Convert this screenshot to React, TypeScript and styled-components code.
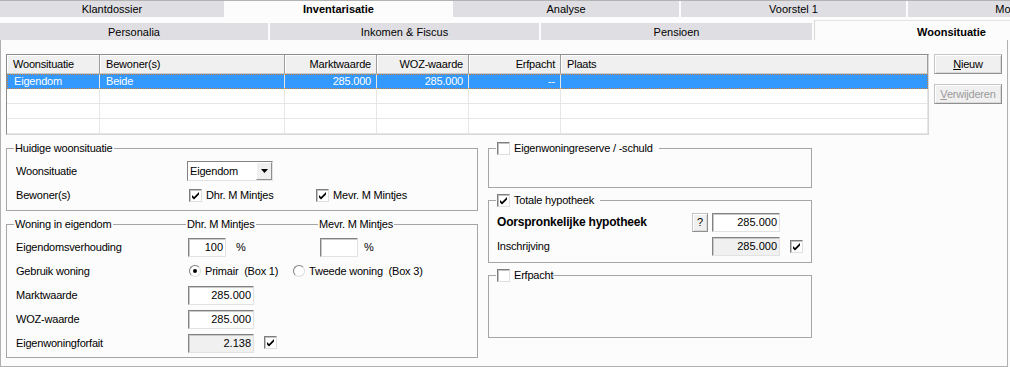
import React from 'react';
import styled, { createGlobalStyle, css } from 'styled-components';

const GlobalStyle = createGlobalStyle`
  html, body { margin: 0; padding: 0; background: #fcfcfc; }
  body {
    font-family: "Liberation Sans", Arial, sans-serif;
    font-size: 11px;
    color: #000;
    overflow: hidden;
  }
  *, *::before, *::after { box-sizing: border-box; }
`;

const Screen = styled.div`
  width: 1010px;
  height: 367px;
  overflow: hidden;
  display: flex;
  flex-direction: column;
  background: #fcfcfc;
`;

/* ---------- tabs ---------- */
const TabRow = styled.div`
  display: flex;
  gap: 2px;
  height: 17px;
  border-top: 1px solid #b3b3b3;
  flex-shrink: 0;
  overflow: hidden;
`;

const TopTab = styled.div<{ $w: number; $active?: boolean }>`
  flex: 0 0 ${p => p.$w}px;
  height: 16px;
  display: flex;
  align-items: center;
  justify-content: center;
  background: ${p => (p.$active ? '#fcfcfc' : '#dfdfe3')};
  font-weight: ${p => (p.$active ? 700 : 400)};
  white-space: nowrap;
  overflow: hidden;
`;

const SubTabRow = styled.div`
  display: flex;
  gap: 2px;
  height: 20px;
  margin-top: 3px;
  align-items: flex-end;
  flex-shrink: 0;
  overflow: hidden;
`;

const SubTab = styled.div<{ $w: number; $active?: boolean }>`
  flex: 0 0 ${p => p.$w}px;
  height: ${p => (p.$active ? 20 : 17)}px;
  display: flex;
  align-items: center;
  justify-content: center;
  white-space: nowrap;
  background: ${p => (p.$active ? '#fcfcfc' : '#dfdfe3')};
  font-weight: ${p => (p.$active ? 700 : 400)};
  ${p =>
    p.$active &&
    css`
      border-left: 1px solid #d6d6d6;
      border-top: 1px solid #e4e4e4;
      padding-top: 2px;
    `}
`;

/* ---------- panel ---------- */
const Panel = styled.div`
  flex: 1;
  width: 1008px;
  border: 1px solid #b0b0b0;
  border-top: none;
  padding: 14px 0 0 5px;
  display: flex;
  flex-direction: column;
`;

const TopSection = styled.div`
  display: flex;
  gap: 5px;
  align-items: flex-start;
`;

const DataGrid = styled.div`
  width: 923px;
  height: 81px;
  display: grid;
  grid-template-columns: 93px 185px 92px 92px 92px 1fr;
  grid-template-rows: 19px repeat(4, 15px);
  border: 1px solid;
  border-color: #8c8c8c #d6d6d6 #d6d6d6 #8c8c8c;
  background: #fff;
  letter-spacing: -0.2px;
`;

const HeadCell = styled.div<{ $right?: boolean }>`
  background: #f0f0f0;
  border-right: 1px solid #9c9c9c;
  border-bottom: 1px solid #c8c8c8;
  box-shadow: inset 1px 1px 0 #fff;
  padding: 0 5px 0 6px;
  line-height: 18px;
  text-align: ${p => (p.$right ? 'right' : 'left')};
  white-space: nowrap;
  overflow: hidden;
`;

const BodyCell = styled.div<{ $right?: boolean; $selected?: boolean; $first?: boolean; $last?: boolean }>`
  border-right: 1px solid #e6e6e6;
  border-bottom: 1px solid #e6e6e6;
  padding: 0 5px 0 6px;
  line-height: 14px;
  text-align: ${p => (p.$right ? 'right' : 'left')};
  white-space: nowrap;
  overflow: hidden;
  ${p =>
    p.$selected &&
    css`
      background: #3399ff;
      color: #fff;
      border-top: 1px dotted #c9803a;
      border-bottom: 1px dotted #c9803a;
      line-height: 13px;
    `}
  ${p => p.$selected && p.$first && css`border-left: 1px dotted #c9803a;`}
  ${p => p.$selected && p.$last && css`border-right: 1px dotted #c9803a;`}
`;

const ButtonCol = styled.div`
  display: flex;
  flex-direction: column;
  gap: 10px;
`;

const PushButton = styled.button<{ $w: number; $h: number; $disabled?: boolean }>`
  width: ${p => p.$w}px;
  height: ${p => p.$h}px;
  padding: 0;
  font-family: "Liberation Sans", Arial, sans-serif;
  font-size: 11px;
  letter-spacing: -0.2px;
  background: #f0f0f0;
  color: ${p => (p.$disabled ? '#9a9a9a' : '#000')};
  border: 1px solid;
  border-color: #c4c4c4 #8f8f8f #8f8f8f #c4c4c4;
  box-shadow: inset 1px 1px 0 #fff, inset -1px -1px 0 #dadada;
  u { text-decoration: underline; }
`;

/* ---------- lower section ---------- */
const Lower = styled.div`
  display: flex;
  gap: 10px;
  margin-top: 7px;
  align-items: flex-start;
`;

const Column = styled.div<{ $w: number; $gap: number }>`
  width: ${p => p.$w}px;
  display: flex;
  flex-direction: column;
  gap: ${p => p.$gap}px;
`;

const Group = styled.fieldset`
  margin: 0;
  padding: 0;
  min-width: 0;
  border: 1px solid #a6a6a6;
`;

const Legend = styled.legend<{ $pr?: number; $full?: boolean }>`
  margin-left: 7px;
  padding: 0 ${p => p.$pr ?? 1}px 0 1px;
  height: 13px;
  line-height: 13px;
  letter-spacing: -0.2px;
  ${p =>
    p.$full &&
    css`
      width: calc(100% - 7px);
      padding: 0;
    `}
`;

const LegendInner = styled.span`
  display: inline-flex;
  align-items: center;
  gap: 4px;
  height: 13px;
  white-space: nowrap;
`;

const LegendGrid = styled.div`
  display: grid;
  grid-template-columns: 172px 132px 1fr;
  height: 13px;
`;

const LegendCell = styled.div`
  display: flex;
  align-items: center;
  white-space: nowrap;
  span { padding: 0 1px; }
`;

const Rule = styled.div`
  flex: 1;
  height: 1px;
  background: #a6a6a6;
`;

const GroupBody = styled.div<{ $pad: string; $h?: number }>`
  padding: ${p => p.$pad};
  display: flex;
  flex-direction: column;
  gap: 4px;
  ${p => p.$h !== undefined && css`height: ${p.$h}px;`}
`;

const FormRow = styled.div<{ $cols: string }>`
  display: grid;
  grid-template-columns: ${p => p.$cols};
  align-items: center;
  height: 20px;
`;

const Label = styled.div<{ $bold?: boolean }>`
  white-space: pre;
  letter-spacing: -0.2px;
  ${p =>
    p.$bold &&
    css`
      font-weight: 700;
      font-size: 12px;
    `}
`;

const Cell = styled.div<{ $span?: boolean; $pl?: number; $end?: boolean }>`
  display: flex;
  align-items: center;
  padding-left: ${p => p.$pl ?? 0}px;
  ${p => p.$span && css`grid-column: 2 / -1;`}
  ${p => p.$end && css`justify-content: flex-end;`}
`;

const Field = styled.div<{ $w: number; $disabled?: boolean }>`
  width: ${p => p.$w}px;
  height: 19px;
  border: 1px solid;
  border-color: #828282 #e2e2e2 #e2e2e2 #828282;
  box-shadow: inset 1px 1px 0 #c9c9c9;
  background: ${p => (p.$disabled ? '#f0f0f0' : '#fff')};
  text-align: right;
  padding-right: 2px;
  line-height: 17px;
`;

const Pct = styled.span<{ $ml: number }>`
  margin-left: ${p => p.$ml}px;
`;

const SelectBox = styled.div`
  width: 86px;
  height: 20px;
  display: flex;
  border: 1px solid;
  border-color: #828282 #e2e2e2 #e2e2e2 #828282;
  background: #fff;
  letter-spacing: -0.2px;
`;

const SelectText = styled.div`
  flex: 1;
  padding-left: 2px;
  line-height: 18px;
`;

const SelectArrow = styled.div`
  width: 16px;
  height: 18px;
  background: #f0f0f0;
  border: 1px solid;
  border-color: #fff #8f8f8f #8f8f8f #fff;
  display: flex;
  align-items: center;
  justify-content: center;
`;

const CheckBox = styled.span`
  display: inline-flex;
  flex: 0 0 13px;
  width: 13px;
  height: 13px;
  background: #fff;
  border: 1px solid;
  border-color: #7e7e7e #dedede #dedede #7e7e7e;
  box-shadow: inset 1px 1px 0 #c2c2c2;
  align-items: center;
  justify-content: center;
`;

const Choices = styled.div`
  display: flex;
  padding-left: 2px;
  align-items: center;
`;

const Choice = styled.div<{ $w?: number }>`
  display: flex;
  align-items: center;
  gap: 4px;
  white-space: pre;
  letter-spacing: -0.2px;
  ${p => p.$w !== undefined && css`width: ${p.$w}px;`}
`;

const RadioDot = styled.span<{ $on?: boolean }>`
  display: inline-flex;
  width: 12px;
  height: 12px;
  border-radius: 50%;
  border: 1px solid;
  border-color: #7e7e7e #dedede #dedede #7e7e7e;
  background: #fff;
  align-items: center;
  justify-content: center;
  &::after {
    content: '';
    width: 4px;
    height: 4px;
    border-radius: 50%;
    background: ${p => (p.$on ? '#000' : 'transparent')};
  }
`;

const Check = ({ checked }: { checked?: boolean }) => (
  <CheckBox>
    {checked && (
      <svg width="11" height="11" viewBox="0 0 11 11">
        <path d="M2 5 L4 7 L9 2 L9 4.5 L4 9.5 L2 7.5 Z" fill="#000" />
      </svg>
    )}
  </CheckBox>
);

const DownArrow = () => (
  <svg width="7" height="4" viewBox="0 0 7 4">
    <polygon points="0,0 7,0 3.5,4" fill="#000" />
  </svg>
);

const headers: { t: string; right?: boolean }[] = [
  { t: 'Woonsituatie' },
  { t: 'Bewoner(s)' },
  { t: 'Marktwaarde', right: true },
  { t: 'WOZ-waarde', right: true },
  { t: 'Erfpacht', right: true },
  { t: 'Plaats' },
];

const selectedRow = ['Eigendom', 'Beide', '285.000', '285.000', '--', ''];

export default function App() {
  return (
    <>
      <GlobalStyle />
      <Screen>
        <TabRow>
          <TopTab $w={224}>Klantdossier</TopTab>
          <TopTab $w={225} $active>Inventarisatie</TopTab>
          <TopTab $w={226}>Analyse</TopTab>
          <TopTab $w={225}>Voorstel 1</TopTab>
          <TopTab $w={226}>Monitoring</TopTab>
        </TabRow>
        <SubTabRow>
          <SubTab $w={268}>Personalia</SubTab>
          <SubTab $w={269}>Inkomen &amp; Fiscus</SubTab>
          <SubTab $w={271}>Pensioen</SubTab>
          <SubTab $w={274} $active>Woonsituatie</SubTab>
        </SubTabRow>

        <Panel>
          <TopSection>
            <DataGrid>
              {headers.map(h => (
                <HeadCell key={h.t} $right={h.right}>{h.t}</HeadCell>
              ))}
              {selectedRow.map((v, i) => (
                <BodyCell
                  key={'s' + i}
                  $selected
                  $first={i === 0}
                  $last={i === selectedRow.length - 1}
                  $right={headers[i].right}
                >
                  {v}
                </BodyCell>
              ))}
              {[0, 1, 2].map(r =>
                headers.map((h, i) => <BodyCell key={`${r}-${i}`} $right={h.right} />)
              )}
            </DataGrid>
            <ButtonCol>
              <PushButton $w={68} $h={20}><u>N</u>ieuw</PushButton>
              <PushButton $w={68} $h={20} $disabled><u>V</u>erwijderen</PushButton>
            </ButtonCol>
          </TopSection>

          <Lower>
            <Column $w={472} $gap={7}>
              <Group>
                <Legend><LegendInner>Huidige woonsituatie</LegendInner></Legend>
                <GroupBody $pad="6px 8px 5px 9px">
                  <FormRow $cols="171px 1fr">
                    <Label>Woonsituatie</Label>
                    <Cell>
                      <SelectBox>
                        <SelectText>Eigendom</SelectText>
                        <SelectArrow><DownArrow /></SelectArrow>
                      </SelectBox>
                    </Cell>
                  </FormRow>
                  <FormRow $cols="171px 1fr">
                    <Label>Bewoner(s)</Label>
                    <Choices>
                      <Choice $w={127}><Check checked />Dhr. M Mintjes</Choice>
                      <Choice><Check checked />Mevr. M Mintjes</Choice>
                    </Choices>
                  </FormRow>
                </GroupBody>
              </Group>

              <Group>
                <Legend $full>
                  <LegendGrid>
                    <LegendCell><span>Woning in eigendom</span><Rule /></LegendCell>
                    <LegendCell><span>Dhr. M Mintjes</span><Rule /></LegendCell>
                    <LegendCell><span>Mevr. M Mintjes</span><Rule /></LegendCell>
                  </LegendGrid>
                </Legend>
                <GroupBody $pad="6px 8px 4px 9px">
                  <FormRow $cols="171px 132px 1fr">
                    <Label>Eigendomsverhouding</Label>
                    <Cell $pl={1}><Field $w={38}>100</Field><Pct $ml={10}>%</Pct></Cell>
                    <Cell $pl={1}><Field $w={38} /><Pct $ml={6}>%</Pct></Cell>
                  </FormRow>
                  <FormRow $cols="171px 132px 1fr">
                    <Label>Gebruik woning</Label>
                    <Cell $span>
                      <Choices>
                        <Choice $w={104}><RadioDot $on />Primair  (Box 1)</Choice>
                        <Choice><RadioDot />Tweede woning  (Box 3)</Choice>
                      </Choices>
                    </Cell>
                  </FormRow>
                  <FormRow $cols="171px 132px 1fr">
                    <Label>Marktwaarde</Label>
                    <Cell $pl={1}><Field $w={66}>285.000</Field></Cell>
                  </FormRow>
                  <FormRow $cols="171px 132px 1fr">
                    <Label>WOZ-waarde</Label>
                    <Cell $pl={1}><Field $w={66}>285.000</Field></Cell>
                  </FormRow>
                  <FormRow $cols="171px 132px 1fr">
                    <Label>Eigenwoningforfait</Label>
                    <Cell $pl={1} $span>
                      <Field $w={66} $disabled>2.138</Field>
                      <Pct $ml={10}><Check checked /></Pct>
                    </Cell>
                  </FormRow>
                </GroupBody>
              </Group>
            </Column>

            <Column $w={324} $gap={6}>
              <Group>
                <Legend $pr={6}>
                  <LegendInner><Check />Eigenwoningreserve / -schuld</LegendInner>
                </Legend>
                <GroupBody $pad="0" $h={32} />
              </Group>

              <Group>
                <Legend $pr={6}>
                  <LegendInner><Check checked />Totale hypotheek</LegendInner>
                </Legend>
                <GroupBody $pad="5px 8px 6px 8px">
                  <FormRow $cols="1fr 20px 68px 23px">
                    <Label $bold>Oorspronkelijke hypotheek</Label>
                    <Cell><PushButton $w={16} $h={19}>?</PushButton></Cell>
                    <Field $w={68}>285.000</Field>
                    <Cell />
                  </FormRow>
                  <FormRow $cols="1fr 20px 68px 23px">
                    <Label>Inschrijving</Label>
                    <Cell />
                    <Field $w={68} $disabled>285.000</Field>
                    <Cell $end><Check checked /></Cell>
                  </FormRow>
                </GroupBody>
              </Group>

              <Group>
                <Legend $pr={0}>
                  <LegendInner><Check />Erfpacht</LegendInner>
                </Legend>
                <GroupBody $pad="0" $h={55} />
              </Group>
            </Column>
          </Lower>
        </Panel>
      </Screen>
    </>
  );
}
